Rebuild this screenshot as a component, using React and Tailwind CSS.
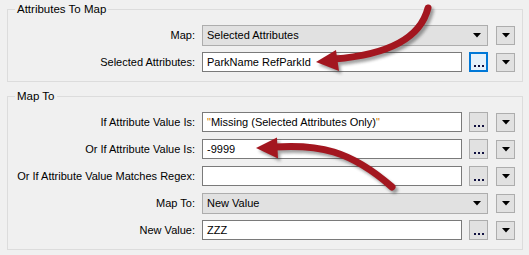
import React from 'react';

const font = { fontFamily: '"Liberation Sans", Arial, sans-serif' };

const Triangle = () => (
  <svg width="8" height="5" viewBox="0 0 8 5" className="block">
    <path d="M0 0 L8 0 L4 4.5 Z" fill="#000" />
  </svg>
);

const DropButton = () => (
  <div className="w-[19px] h-[19px] ml-[8px] bg-[#e1e1e1] border border-[#adadad] flex items-center justify-center">
    <Triangle />
  </div>
);

const Dots = () => (
  <div className="flex gap-[2px]">
    <div className="w-[2px] h-[2px] bg-[#101040]" />
    <div className="w-[2px] h-[2px] bg-[#101040]" />
    <div className="w-[2px] h-[2px] bg-[#101040]" />
  </div>
);

const DotsButton = ({ focused }) => (
  <div
    className={
      focused
        ? 'w-[19px] h-[20px] ml-[7px] bg-[#e5f1fb] border-2 border-[#0078d7] flex items-end justify-center pb-[3px]'
        : 'w-[19px] h-[20px] ml-[7px] bg-[#e1e1e1] border border-[#adadad] flex items-end justify-center pb-[4px]'
    }
  >
    <Dots />
  </div>
);

const Row = ({ label, children }) => (
  <div className="flex items-center h-[20px]">
    <div className="w-[180px] text-right text-[11px] text-black whitespace-nowrap">{label}</div>
    <div className="flex items-center ml-[7px]">{children}</div>
  </div>
);

const TextRow = ({ label, value, focused }) => (
  <Row label={label}>
    <div className="w-[260px] h-[20px] bg-white border border-[#7a7a7a] flex items-center px-[4px] text-[11px] text-black whitespace-nowrap overflow-hidden">
      {value}
    </div>
    <DotsButton focused={focused} />
    <DropButton />
  </Row>
);

const ComboRow = ({ label, value }) => (
  <Row label={label}>
    <div className="w-[286px] h-[21px] bg-[#e1e1e1] border border-[#adadad] flex items-center justify-between pl-[4px] pr-[6px] text-[11px] text-black">
      <span>{value}</span>
      <Triangle />
    </div>
    <DropButton />
  </Row>
);

const Group = ({ title, className, children }) => (
  <fieldset className={`border border-[#dcdcdc] mx-[7px] px-[7px] ${className}`}>
    <legend className="px-[2px] text-[11.5px] leading-[16px] text-black">{title}</legend>
    <div className="flex flex-col gap-[7px]">{children}</div>
  </fieldset>
);

const Arrows = () => (
  <svg className="absolute inset-0 pointer-events-none" width="529" height="255" viewBox="0 0 529 255">
    <defs>
      <filter id="sh" x="-20%" y="-20%" width="140%" height="140%">
        <feGaussianBlur stdDeviation="1.6" />
      </filter>
    </defs>
    <g transform="translate(2.5 3)" opacity="0.45" filter="url(#sh)">
      <path d="M428 8 C420 40 385 55 334 59" stroke="#333" strokeWidth="7" fill="none" strokeLinecap="round" />
      <path d="M316 62 L336 50 L339 71 Z" fill="#333" />
      <path d="M274 147 C318 144 350 150 392 187" stroke="#333" strokeWidth="7" fill="none" strokeLinecap="round" />
      <path d="M256 148 L277 137.5 L278 158.5 Z" fill="#333" />
    </g>
    <g>
      <path d="M428 8 C420 40 385 55 334 59" stroke="#a3161f" strokeWidth="7" fill="none" strokeLinecap="round" />
      <path d="M316 62 L336 50 L339 71 Z" fill="#a3161f" />
      <path d="M274 147 C318 144 350 150 392 187" stroke="#a3161f" strokeWidth="7" fill="none" strokeLinecap="round" />
      <path d="M256 148 L277 137.5 L278 158.5 Z" fill="#a3161f" />
    </g>
  </svg>
);

export default function App() {
  return (
    <div className="relative w-[529px] h-[255px] bg-[#f0f0f0] overflow-hidden" style={font}>
      <div className="pt-[1px]">
        <Group title="Attributes To Map" className="pt-[8px] pb-[9px]">
          <ComboRow label="Map:" value="Selected Attributes" />
          <TextRow label="Selected Attributes:" value="ParkName RefParkId" focused />
        </Group>
        <Group title="Map To" className="mt-[6px] pt-[8px] pb-[9px]">
          <TextRow
            label="If Attribute Value Is:"
            value={
              <span>
                <span className="text-[#d47a00]">"</span>Missing (Selected Attributes Only)
                <span className="text-[#d47a00]">"</span>
              </span>
            }
          />
          <TextRow label="Or If Attribute Value Is:" value="-9999" />
          <TextRow label="Or If Attribute Value Matches Regex:" value="" />
          <ComboRow label="Map To:" value="New Value" />
          <TextRow label="New Value:" value="ZZZ" />
        </Group>
      </div>
      <Arrows />
    </div>
  );
}
